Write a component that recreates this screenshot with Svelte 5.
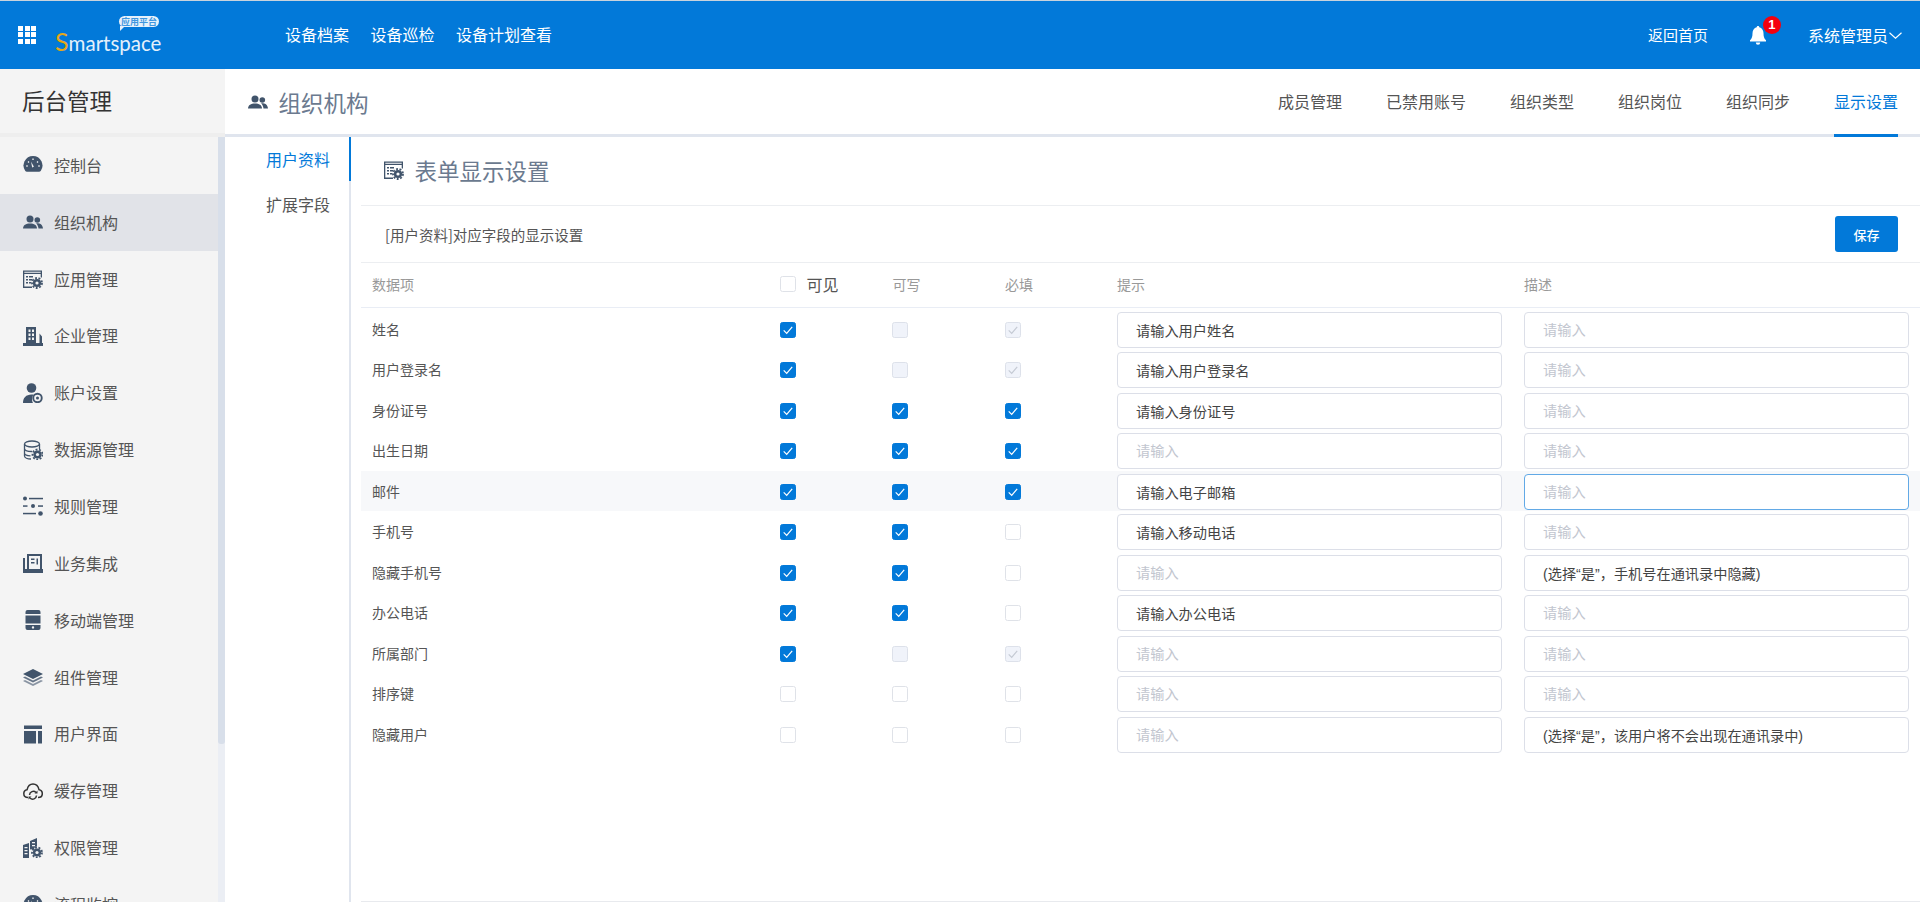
<script>
  const menu = [
    ['控制台', 'dash'], ['组织机构', 'users'], ['应用管理', 'app'], ['企业管理', 'corp'],
    ['账户设置', 'account'], ['数据源管理', 'db'], ['规则管理', 'rules'], ['业务集成', 'biz'],
    ['移动端管理', 'mobile'], ['组件管理', 'layers'], ['用户界面', 'layout'], ['缓存管理', 'cloud'],
    ['权限管理', 'perm'], ['流程监控', 'dash']
  ];
  const tabs = ['成员管理', '已禁用账号', '组织类型', '组织岗位', '组织同步', '显示设置'];
  const s1 = '(选择“是”，手机号在通讯录中隐藏)';
  const s2 = '(选择“是”，该用户将不会出现在通讯录中)';
  const rows = [
    { n: '姓名', c: ['on', 'dis', 'dischk'], h: '请输入用户姓名', d: '' },
    { n: '用户登录名', c: ['on', 'dis', 'dischk'], h: '请输入用户登录名', d: '' },
    { n: '身份证号', c: ['on', 'on', 'on'], h: '请输入身份证号', d: '' },
    { n: '出生日期', c: ['on', 'on', 'on'], h: '', d: '' },
    { n: '邮件', c: ['on', 'on', 'on'], h: '请输入电子邮箱', d: '', hot: true },
    { n: '手机号', c: ['on', 'on', 'off'], h: '请输入移动电话', d: '' },
    { n: '隐藏手机号', c: ['on', 'on', 'off'], h: '', d: s1 },
    { n: '办公电话', c: ['on', 'on', 'off'], h: '请输入办公电话', d: '' },
    { n: '所属部门', c: ['on', 'dis', 'dischk'], h: '', d: '' },
    { n: '排序键', c: ['off', 'off', 'off'], h: '', d: '' },
    { n: '隐藏用户', c: ['off', 'off', 'off'], h: '', d: s2 }
  ];
</script>

{#snippet gear(x, y, bg)}
  <circle cx={x} cy={y} r="4.1" fill="#41546b" />
  <circle cx={x} cy={y} r="5" fill="none" stroke="#41546b" stroke-width="1.8" stroke-dasharray="1.9 1.6" />
  <circle cx={x} cy={y} r="1.6" fill={bg} />
{/snippet}

{#snippet icon(name, bg = '#f4f4f4')}
  <svg class="ico" viewBox="0 0 20 20" width="20" height="20" fill="#41546b">
    {#if name === 'dash'}
      <path d="M10 1a9.500 9.500 0 0 1 7.700 15c-.4.5-1 .8-1.600.8H3.900c-.6 0-1.200-.3-1.600-.8A9.500 9.500 0 0 1 10 1z" />
      <path d="M5 6.500l1 1M10 3.500v1.500M15 6.500l-1 1M3.300 11h1.400M15.300 11h1.400" stroke={bg} stroke-width="1.300" />
      <path d="M8 6.500l2.900 5.200-1.700.9z" fill={bg} />
    {:else if name === 'users'}
      <circle cx="7" cy="7" r="3.500" />
      <path d="M0 16.500c.3-3.600 2.800-5 7-5s6.700 1.400 7 5z" />
      <circle cx="14.300" cy="8" r="2.800" />
      <path d="M13 11.300c3.200-.3 6.500.6 7 5.200h-4.500c-.2-2-1-3.800-2.500-5.200z" />
    {:else if name === 'app'}
      <path fill-rule="evenodd" d="M0 1.500h19v7h-1.300V5H1.300v12.500H9V19H0zM1.300 2.800v1h16.400v-1z" />
      <path d="M3 7h2v1.400H3zM6 7h4v1.400H6zM3 10h2v1.400H3zM6 10h3v1.400H6zM3 13h2v1.400H3zM6 13h2v1.400H6z" />
      {@render gear(14, 14, bg)}
    {:else if name === 'corp'}
      <path fill-rule="evenodd" d="M3 1h10v3h0v13h3.500V7.500l2.500 3V17h1v3H0v-3h3zM5.500 3.500v2.500h2V3.500zM9 3.500v2.500h2V3.500zM5.500 7.500V10h2V7.500zM9 7.500V10h2V7.500zM5.500 11.500V14h2v-2.500zM9 11.500V14h2v-2.500z" />
    {:else if name === 'account'}
      <circle cx="8.500" cy="5" r="4.800" />
      <path d="M0 20c0-5 3-8.500 8.500-8.500 1 0 1.500.1 2 .3-1.500 1.500-2 5.500-.5 8.200z" />
      <circle cx="14.500" cy="15" r="5.200" />
      <circle cx="14.500" cy="15" r="3.300" fill={bg} />
      <circle cx="14.500" cy="15" r="1.500" />
    {:else if name === 'db'}
      <g fill="none" stroke="#41546b" stroke-width="1.300">
        <ellipse cx="9" cy="4" rx="7.500" ry="3" />
        <path d="M1.500 4v12c0 1.700 3 3 6.500 3M16.500 4v5M1.500 8.500c0 1.700 3.300 3 7.500 3M1.500 13c0 1.600 3 2.800 6 2.900" />
      </g>
      {@render gear(14.500, 14.500, bg)}
    {:else if name === 'rules'}
      <circle cx="2" cy="2.500" r="2" /><rect x="6" y="1.800" width="14" height="1.500" />
      <rect x="0" y="9.300" width="4.500" height="1.500" /><circle cx="10" cy="10" r="2" /><rect x="15" y="9.300" width="5" height="1.500" />
      <rect x="0" y="16.800" width="13" height="1.500" /><circle cx="17.500" cy="17.500" r="2.300" />
    {:else if name === 'biz'}
      <path fill-rule="evenodd" d="M0 5h2v11h2V1h15v15h1v4H0zM6 3v13h11V3zM8 5.500h3.500V7H8zM8 9h3.500v1.500H8zM13.500 5.500H15v6h-1.500z" />
    {:else if name === 'mobile'}
      <path d="M4.500 0h11A2 2 0 0 1 17.500 2v2H2.500V2A2 2 0 0 1 4.500 0zM2.500 5.500h15v8h-15z" />
      <path fill-rule="evenodd" d="M2.500 15h15v3a2 2 0 0 1-2 2h-11a2 2 0 0 1-2-2zM10 16.200a1.200 1.200 0 1 0 0 2.400 1.200 1.200 0 0 0 0-2.400z" />
    {:else if name === 'layers'}
      <path d="M10 2l10 5-10 5L0 7z" />
      <path d="M0 10.500l2-1 8 4 8-4 2 1-10 5z" opacity=".8" />
      <path d="M0 14l2-1 8 4 8-4 2 1-10 5z" opacity=".6" />
    {:else if name === 'layout'}
      <path d="M1 1.500h18v3.500H1zM1 7h12v12.500H1zM15 7h4v12.500h-4z" />
    {:else if name === 'cloud'}
      <g fill="none" stroke="#333" stroke-width="1.500">
        <path d="M5 16.500c-2.500 0-4.200-1.700-4.200-4 0-2 1.400-3.500 3.300-3.800C4.800 5.500 7 3 10 3s5.300 2.500 6 5.700c1.900.3 3.300 1.800 3.300 3.800 0 2.300-1.700 4-4.300 4" />
        <path d="M6.500 14a3.800 3.800 0 0 1 6.500-2.500M13.500 14.500A3.800 3.800 0 0 1 7 17" />
      </g>
      <path d="M14.500 9.500v3h-3zM5.500 18.500v-3h3z" fill="#333" />
    {:else if name === 'perm'}
      <path fill-rule="evenodd" d="M0 7l6-2v15H0zM1.500 9v1.300h3V9zM1.500 12v1.300h3V12zM1.500 15v1.300h3V15zM7 3l7-3v8.500l-2 .5-1 2-4 .5zM9 4v1.300h3V4zM9 7v1.300h3V7z" />
      {@render gear(14, 14.500, bg)}
    {/if}
  </svg>
{/snippet}

<div class="page">
  <header class="top">
    <div class="grid-ico">
      {#each Array(9) as _}<i></i>{/each}
    </div>
    <div class="logo">
      <span class="bubble">应用平台</span>
      <span class="word"><b>S</b>martspace</span>
    </div>
    <nav class="topnav">
      <a href="#a">设备档案</a>
      <a href="#b">设备巡检</a>
      <a href="#c">设备计划查看</a>
    </nav>
    <div class="top-right">
      <span class="home">返回首页</span>
      <span class="bell">
        <svg viewBox="0 0 16 19" width="16" height="19" fill="#fff">
          <path d="M8 0c.8 0 1.200.5 1.300 1.200C12 2 13.500 4.300 13.500 7.200c0 3.300.6 5.300 2.500 7.100v1.200H0v-1.200c1.900-1.800 2.500-3.800 2.500-7.100C2.500 4.300 4 2 6.700 1.200 6.800.5 7.200 0 8 0z" />
          <path d="M5.800 16.500h4.400A2.200 2.200 0 0 1 8 18.700a2.200 2.200 0 0 1-2.200-2.200z" />
        </svg>
        <em>1</em>
      </span>
      <span class="user">系统管理员</span>
      <svg class="chev" viewBox="0 0 13 7" width="13" height="7" fill="none" stroke="#fff" stroke-width="1.200">
        <path d="M.5.700l6 5.500 6-5.500" />
      </svg>
    </div>
  </header>

  <div class="body">
    <aside class="side">
      <div class="side-title">后台管理</div>
      <div class="side-body">
        <ul class="menu">
          {#each menu as [label, ic], i}
            <li class:active={i === 1}>
              {@render icon(ic, i === 1 ? '#e1e3e8' : '#f4f4f4')}
              <span>{label}</span>
            </li>
          {/each}
        </ul>
        <div class="track"><div class="thumb"></div></div>
      </div>
    </aside>

    <main class="main">
      <div class="head">
        <div class="head-title">
          {@render icon('users', '#fff')}
          <h1>组织机构</h1>
        </div>
        <div class="tabs">
          {#each tabs as t, i}
            <span class="tab" class:cur={i === 5}>{t}</span>
          {/each}
        </div>
      </div>

      <div class="work">
        <div class="sub">
          <div class="sub-item cur">用户资料</div>
          <div class="sub-item">扩展字段</div>
        </div>
        <section class="content">
          <div class="c-title">
            {@render icon('app', '#fff')}
            <h2>表单显示设置</h2>
          </div>
          <div class="c-desc">
            <span>[用户资料]对应字段的显示设置</span>
            <button class="save">保存</button>
          </div>
          <div class="tr thead">
            <div class="name">数据项</div>
            <div class="all"><span class="cb off"></span><span class="vis">可见</span></div>
            <div>可写</div>
            <div>必填</div>
            <div>提示</div>
            <div>描述</div>
          </div>
          <div class="tbody">
            {#each rows as r}
              <div class="tr row" class:hot={r.hot}>
                <div class="name">{r.n}</div>
                {#each r.c as st}
                  <div>
                    <span class="cb {st}">
                      {#if st === 'on' || st === 'dischk'}
                        <svg viewBox="0 0 15 16" width="16" height="16" fill="none" stroke-width="1.200">
                          <path d="M3.200 8.300l3 3 5.500-6.500" />
                        </svg>
                      {/if}
                    </span>
                  </div>
                {/each}
                <div><input class="ipt" placeholder="请输入" value={r.h} /></div>
                <div><input class="ipt" class:focus={r.hot} placeholder="请输入" value={r.d} /></div>
              </div>
            {/each}
          </div>
        </section>
      </div>
    </main>
  </div>
</div>

<style>
  :global(body) {
    margin: 0;
    background: #fff;
    overflow: hidden;
    font-family: "Noto Sans CJK SC", "Liberation Sans", sans-serif;
  }
  .page { width: 1920px; height: 902px; display: flex; flex-direction: column; overflow: hidden; }

  .top {
    height: 68px; border-top: 1px solid #c9d3dd; background: #0279d9; color: #fff;
    display: flex; align-items: center; flex: none;
  }
  .grid-ico {
    margin-left: 18px; width: 18px; height: 18px; display: grid;
    grid-template-columns: repeat(3, 5px); grid-auto-rows: 5px; gap: 1.5px;
    margin-top: -1px;
  }
  .grid-ico i { background: #fff; display: block; }
  .logo { margin-left: 19px; width: 104px; height: 44px; display: flex; flex-direction: column; align-items: flex-end; }
  .bubble {
    position: relative; background: #e6f1fb; color: #3f97e0; font-size: 9px; line-height: 11px;
    border-radius: 6px; padding: 0 2px; height: 11px; margin-top: 3px; font-weight: 700; white-space: nowrap;
  }
  .bubble::after {
    content: ""; position: absolute; left: 1px; bottom: -4px; width: 0; height: 0;
    border-top: 5px solid #e6f1fb; border-right: 5px solid transparent;
  }
  .word {
    font-family: Lato, sans-serif; font-size: 20.500px; line-height: 28px;
    color: #e4f0fb; width: 104px; white-space: nowrap;
  }
  .word b { color: #e6a817; font-weight: 400; font-size: 25px; }
  .topnav { margin-left: 126px; display: flex; gap: 21.5px; }
  .topnav a { color: #fff; text-decoration: none; font-size: 16px; line-height: 24px; margin-top: -2px; }
  .top-right { margin-left: auto; display: flex; align-items: center; padding-right: 18px; }
  .home { font-size: 15px; margin-right: 42px; margin-top: -1px; }
  .bell { position: relative; width: 16px; height: 19px; margin-right: 42px; }
  .bell svg { display: block; }
  .bell em {
    position: absolute; left: 13px; top: -10px; width: 18px; height: 18px; border-radius: 50%;
    background: #f5000e; color: #fff; font: 700 13px/18px "Liberation Sans", sans-serif; text-align: center;
  }
  .user { font-size: 16px; margin-top: -1px; }
  .chev { margin-left: 1px; }

  .body { flex: 1; display: flex; min-height: 0; }

  .side { width: 225px; flex: none; background: #f4f4f4; display: flex; flex-direction: column; min-height: 0; }
  .side-title {
    height: 64px; flex: none; border-bottom: 4px solid #eeeeee; padding-left: 22px;
    font-size: 22.500px; line-height: 62px; color: #333;
  }
  .side-body { flex: 1; display: flex; min-height: 0; overflow: hidden; }
  .menu { list-style: none; margin: 0; padding: 0; width: 218px; flex: none; }
  .menu li { height: 56.850px; display: flex; align-items: center; padding-left: 23px; color: #555; font-size: 16px; }
  .menu li.active { background: #e1e3e8; }
  .menu li span { margin-left: 11px; line-height: 24px; margin-top: -1px; }
  .ico { display: block; flex: none; }
  .track { width: 7px; flex: none; background: #ebeef4; height: 100%; }
  .thumb { height: 607px; background: #d8dfea; border-radius: 0 0 3px 3px; }

  .main { flex: 1; display: flex; flex-direction: column; min-width: 0; }
  .head {
    height: 65px; flex: none; border-bottom: 3px solid #e0e5ee; display: flex; align-items: stretch;
    justify-content: space-between;
  }
  .head-title { display: flex; align-items: center; padding-left: 23px; }
  h1, h2 { margin: 0 0 0 10.500px; font-weight: 400; font-size: 22.500px; color: #6b7a8f; line-height: 32px; }
  .tabs { display: flex; gap: 44px; padding-right: 22px; }
  .tab { position: relative; font-size: 16px; line-height: 65px; color: #555; }
  .tab.cur { color: #0279d9; }
  .tab.cur::after { content: ""; position: absolute; left: 0; right: 0; bottom: -3px; height: 3px; background: #0279d9; }

  .work { flex: 1; display: flex; min-height: 0; }
  .sub { width: 124px; flex: none; border-right: 2px solid #e0e5ee; display: flex; flex-direction: column; gap: 1px; }
  .sub-item { height: 44px; line-height: 44px; padding-left: 41px; font-size: 16px; color: #555; position: relative; }
  .sub-item.cur { color: #0279d9; }
  .sub-item.cur::after { content: ""; position: absolute; right: -2px; top: 0; bottom: 0; width: 2px; background: #0279d9; }

  .content { flex: 1; margin-left: 10px; min-width: 0; height: 764px; border-bottom: 1px solid #e8eaee; }
  .c-title { height: 69px; border-bottom: 1px solid #eceef1; display: flex; align-items: center; padding: 0 0 2px 23px; box-sizing: border-box; }
  .c-desc {
    height: 56px; border-bottom: 1px solid #eceef1; display: flex; align-items: center;
    justify-content: space-between; padding: 0 22px 0 24px; font-size: 14.500px; color: #555;
  }
  .save {
    width: 63px; height: 36px; border: 0; border-radius: 3px; background: #0279d9; color: #fff;
    font: 500 13px "Noto Sans CJK SC", sans-serif; padding: 0;
  }
  .tr { display: grid; grid-template-columns: 419px 112.5px 112.5px 112px 407px 1fr; align-items: center; }
  .thead { height: 41px; padding-bottom: 3px; border-bottom: 1px solid #e9edf5; font-size: 14px; color: #999; }
  .tbody { padding-top: .5px; }
  .name { padding-left: 11px; }
  .all { display: flex; align-items: center; }
  .vis { margin-left: 11px; font-size: 16px; color: #555; }
  .row { height: 40.5px; font-size: 14px; color: #555; }
  .row.hot { background: #f7f8fa; }
  .cb {
    display: block; width: 16px; height: 16px; box-sizing: border-box; border-radius: 2.500px;
    border: 1px solid #dfe2e8; background: #fff; position: relative; margin-left: -.5px;
  }
  .row .cb { margin-top: 1.500px; }
  .cb svg { position: absolute; left: -1px; top: -1px; display: block; stroke: #fff; }
  .cb.on { background: #0279d9; border-color: #0279d9; }
  .cb.dis, .cb.dischk { background: #f0f3fa; border-color: #dde1ea; }
  .cb.dischk svg { stroke: #c5cad4; }
  .ipt {
    display: block; width: 385px; height: 36px; box-sizing: border-box; border: 1px solid #dcdfe8; margin-top: 2px;
    border-radius: 4px; padding: 0 18px; font: 14.200px "Liberation Sans", "Noto Sans CJK SC", sans-serif; color: #444; background: #fff; outline: 0;
  }
  .ipt::placeholder { color: #c2c6cf; opacity: 1; }
  .ipt.focus { border-color: #62a9e6; }
</style>
